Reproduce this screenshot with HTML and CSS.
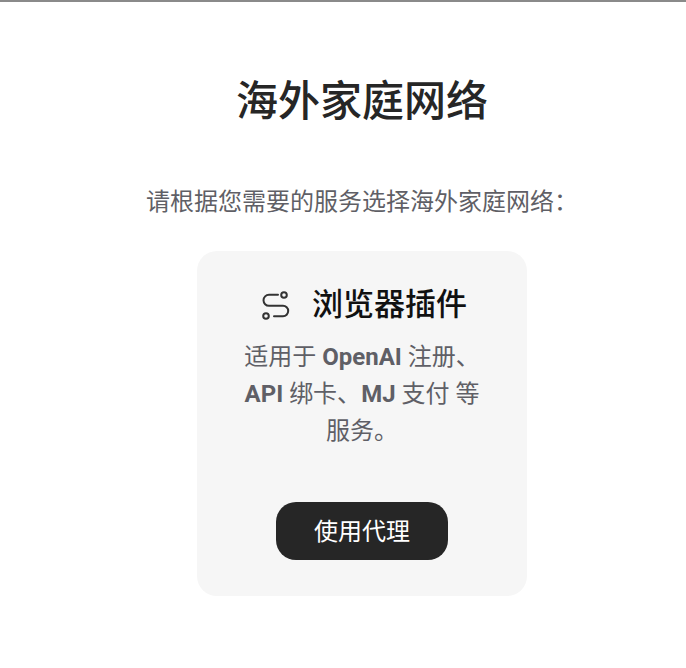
FILE: index.html
```html
<!DOCTYPE html>
<html lang="zh-CN">
<head>
    <meta charset="utf-8" />
    <title>海外家庭网络</title>
    <link rel="stylesheet" href="styles.css">
</head>
<body>
    <main class="page">
        <h1 class="title">海外家庭网络</h1>
        <p class="intro">请根据您需要的服务选择海外家庭网络：</p>
        <div class="card">
            <div class="cardHead">
                <svg class="cardIcon" viewBox="0 0 28 30" width="28" height="30" fill="none" stroke="#333" stroke-width="2" stroke-linecap="round">
                    <circle cx="22" cy="5" r="2.8"></circle>
                    <circle cx="4" cy="26" r="2.8"></circle>
                    <path d="M16 4.8H7a5.5 5.5 0 0 0 0 11h14a5.2 5.2 0 0 1 0 10.4H12"></path>
                </svg>
                <h2 class="cardTitle">浏览器插件</h2>
            </div>
            <p class="cardText">适用于 <b>OpenAI</b> 注册、<br><b>API</b> 绑卡、<b>MJ</b> 支付 等<br>服务。</p>
            <button class="useBtn">使用代理</button>
        </div>
    </main>
</body>
</html>
```

FILE: styles.css
```css
body {
    font-family: Roboto, "Noto Sans CJK SC", sans-serif;
    margin: 0;
    background-color: #fff;
}
.page {
    display: flex;
    flex-direction: column;
    align-items: center;
    min-height: 668px;
    box-sizing: border-box;
    border-top: 2px solid #8a8a8a;
    padding-top: 70px;
    padding-left: 38px;
}
.title {
    margin: 0;
    font-size: 42px;
    line-height: 60px;
    font-weight: 500;
    color: #262626;
}
.intro {
    margin: 52px 0 0;
    font-size: 24px;
    line-height: 36px;
    color: #5f5f66;
}
.card {
    display: flex;
    flex-direction: column;
    align-items: center;
    width: 330px;
    height: 345px;
    box-sizing: border-box;
    margin-top: 31px;
    padding-top: 32px;
    border-radius: 20px;
    background-color: #f6f6f6;
}
.cardHead {
    display: flex;
    align-items: center;
    gap: 22px;
    margin-left: 5px;
}
.cardTitle {
    margin: 0;
    font-size: 31px;
    line-height: 44px;
    font-weight: 500;
    color: #111;
}
.cardText {
    margin: 12px 0 0;
    width: 270px;
    font-size: 24px;
    line-height: 37px;
    text-align: center;
    color: #5f5f66;
}
.useBtn {
    margin-top: 52px;
    padding: 0 0 4px;
    width: 172px;
    height: 58px;
    border: none;
    border-radius: 20px;
    background-color: #262626;
    color: #fff;
    font-family: inherit;
    font-size: 24px;
}
```
